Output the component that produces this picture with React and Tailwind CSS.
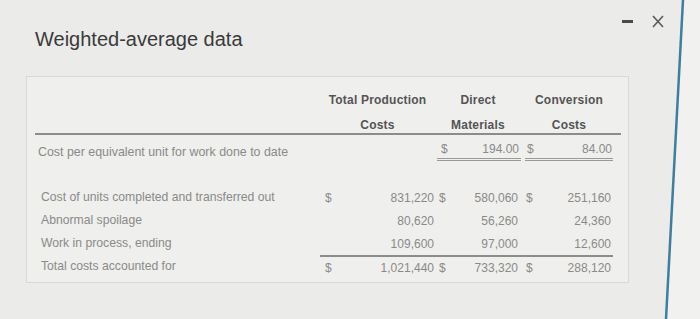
export default function App() {
  const rows = [
    { label: "Cost of units completed and transferred out", dollar: true, tpc: "831,220", dm: "580,060", cc: "251,160" },
    { label: "Abnormal spoilage", dollar: false, tpc: "80,620", dm: "56,260", cc: "24,360" },
    { label: "Work in process, ending", dollar: false, tpc: "109,600", dm: "97,000", cc: "12,600" },
    { label: "Total costs accounted for", dollar: true, tpc: "1,021,440", dm: "733,320", cc: "288,120", total: true },
  ];

  return (
    <div className="relative w-[700px] h-[319px] overflow-hidden bg-[#ebebe9] pt-[27px] font-['Liberation_Sans',Arial,sans-serif]">
      {/* screen edge */}
      <svg className="absolute inset-0 pointer-events-none" width="700" height="319">
        <polygon points="684,0 700,0 700,319 667,319" fill="#f1f1ef" />
        <line x1="683" y1="0" x2="666" y2="319" stroke="#3d7f9e" strokeWidth="2.5" />
      </svg>

      {/* window controls */}
      <div className="absolute top-[15px] left-[622px] flex items-center gap-[19px]">
        <div className="w-[11px] h-[3px] bg-[#4a4a4a]" />
        <svg width="12" height="13" viewBox="0 0 12 13">
          <path d="M1 1 L11 12 M11 1 L1 12" stroke="#5a5a5a" strokeWidth="1.6" fill="none" />
        </svg>
      </div>

      <h1 className="pl-[35px] text-[20px] leading-[24px] text-[#3a3a3a]">Weighted-average data</h1>

      <div className="relative mt-[25px] ml-[26px] w-[603px] h-[207px] border border-[#d9d9d6] bg-[#efefed] pl-[8px] pt-[13px]">
        {/* header */}
        <div className="grid grid-cols-[285px_115px_86px_96px] text-[12px] font-bold text-[#545454] tracking-[0.2px]">
          <div className="h-[20px]" />
          <div className="h-[20px] flex items-center justify-center">Total Production</div>
          <div className="h-[20px] flex items-center justify-center">Direct</div>
          <div className="h-[20px] flex items-center justify-center">Conversion</div>
        </div>
        <div className="mt-[2px] w-[586px] grid grid-cols-[285px_115px_86px_96px] text-[12px] font-bold text-[#545454] tracking-[0.2px] border-b-2 border-[#8c8c8a]">
          <div className="h-[21px]" />
          <div className="h-[21px] pt-[4px] flex items-center justify-center">Costs</div>
          <div className="h-[21px] pt-[4px] flex items-center justify-center">Materials</div>
          <div className="h-[21px] pt-[4px] flex items-center justify-center">Costs</div>
        </div>

        {/* cost per equivalent unit */}
        <div className="mt-[6px] grid grid-cols-[285px_115px_86px_96px] text-[#8a8a88]">
          <div className="h-[18px] pl-[3px] flex items-center translate-y-[2px] text-[12.4px] whitespace-nowrap">Cost per equivalent unit for work done to date</div>
          <div />
          <div className="ml-[2px] h-[20px] pb-[2px] flex items-center justify-between border-b-[3px] border-double border-[#9a9a98] text-[12px]">
            <span className="pl-[4px]">$</span>
            <span className="pr-[2px]">194.00</span>
          </div>
          <div className="ml-[4px] mr-[4px] h-[20px] pb-[2px] flex items-center justify-between border-b-[3px] border-double border-[#9a9a98] text-[12px]">
            <span className="pl-[2px]">$</span>
            <span className="pr-[1px]">84.00</span>
          </div>
        </div>

        {/* body */}
        <div className="mt-[25px] flex flex-col">
          {rows.map((r, i) => (
            <div key={i} className="grid grid-cols-[285px_115px_86px_96px] text-[#8a8a88]">
              <div className="h-[23px] pl-[6px] flex items-center text-[12.2px] whitespace-nowrap">{r.label}</div>
              <div className={`h-[23px] flex items-center justify-between text-[12px] ${r.total ? "border-t-2 border-[#8c8c8a]" : ""}`}>
                <span className="pl-[5px]">{r.dollar ? "$" : ""}</span>
                <span className="pr-[1px]">{r.tpc}</span>
              </div>
              <div className={`h-[23px] flex items-center justify-between text-[12px] ${r.total ? "border-t-2 border-[#8c8c8a]" : ""}`}>
                <span className="pl-[4px]">{r.dollar ? "$" : ""}</span>
                <span className="pr-[3px]">{r.dm}</span>
              </div>
              <div className={`mr-[4px] h-[23px] flex items-center justify-between text-[12px] ${r.total ? "border-t-2 border-[#8c8c8a]" : ""}`}>
                <span className="pl-[5px]">{r.dollar ? "$" : ""}</span>
                <span className="pr-[2px]">{r.cc}</span>
              </div>
            </div>
          ))}
        </div>
      </div>
    </div>
  );
}
